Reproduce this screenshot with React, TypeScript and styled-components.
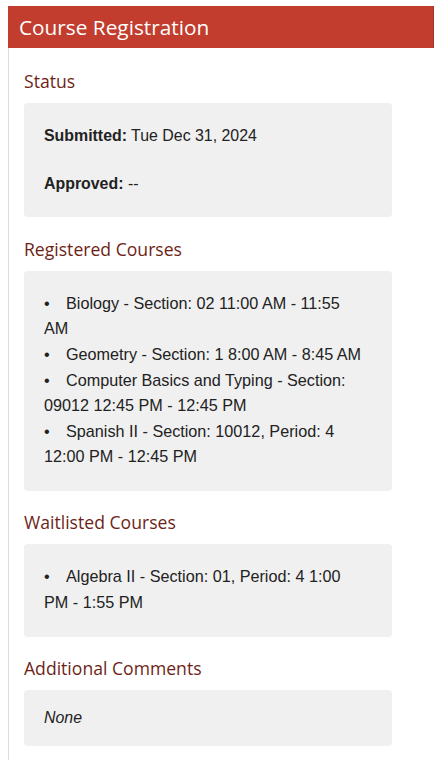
import React from "react";
import styled, { createGlobalStyle } from "styled-components";

const Global = createGlobalStyle`
  html, body { margin: 0; padding: 0; background: #fff; }
  body { font-family: "Liberation Sans", Arial, sans-serif; }
`;

const Page = styled.div`
  padding: 6px 0 0 8px;
`;

const Panel = styled.div`
  display: flex;
  flex-direction: column;
  min-height: calc(100vh - 6px);
`;

const Header = styled.div`
  background: #c23d2d;
  color: #fff;
  height: 42px;
  flex: none;
  display: flex;
  align-items: center;
  padding-left: 11px;
  font-family: "Open Sans", "Noto Sans", sans-serif;
  font-size: 20.8px;
  border-right: 1px solid #a9352a;
`;

const Body = styled.div`
  flex: 1;
  border-left: 1px solid #dcdcdc;
  padding: 1.5px 42px 20px 15px;
  display: flex;
  flex-direction: column;
`;

const Heading = styled.h3`
  margin: 20.5px 0 11px;
  font-family: "Open Sans", "Noto Sans", sans-serif;
  font-weight: 400;
  font-size: 17.6px;
  line-height: 22px;
  color: #6e1f17;
`;

const Box = styled.div<{ $compact?: boolean }>`
  background: #f0f0f0;
  border-radius: 4px;
  padding: ${(p) => (p.$compact ? "15px 20px 16px" : "20px 20px 21px")};
  color: #222;
  font-size: 15.9px;
  line-height: 25.3px;
  display: flex;
  flex-direction: column;
  gap: ${(p) => (p.$compact ? "0" : "22.7px")};
`;

const Row = styled.div``;

const Label = styled.b`
  font-weight: 700;
`;

const List = styled.ul`
  list-style: none;
  margin: 0;
  padding: 0 6px 0 0;
  font-size: 16.2px;
  line-height: 25.6px;
`;

const Item = styled.li`
  &::before {
    content: "•";
    display: inline-block;
    width: 22px;
  }
`;

const Note = styled.em`
  font-style: italic;
  color: #222;
`;

const registered = [
  "Biology - Section: 02 11:00 AM - 11:55 AM",
  "Geometry - Section: 1 8:00 AM - 8:45 AM",
  "Computer Basics and Typing - Section: 09012 12:45 PM - 12:45 PM",
  "Spanish II - Section: 10012, Period: 4 12:00 PM - 12:45 PM",
];

const waitlisted = ["Algebra II - Section: 01, Period: 4 1:00 PM - 1:55 PM"];

export default function App() {
  return (
    <>
      <Global />
      <Page>
        <Panel>
          <Header>Course Registration</Header>
          <Body>
            <Heading>Status</Heading>
            <Box>
              <Row>
                <Label>Submitted:</Label> Tue Dec 31, 2024
              </Row>
              <Row>
                <Label>Approved:</Label> --
              </Row>
            </Box>

            <Heading>Registered Courses</Heading>
            <Box>
              <List>
                {registered.map((c) => (
                  <Item key={c}>{c}</Item>
                ))}
              </List>
            </Box>

            <Heading>Waitlisted Courses</Heading>
            <Box>
              <List>
                {waitlisted.map((c) => (
                  <Item key={c}>{c}</Item>
                ))}
              </List>
            </Box>

            <Heading>Additional Comments</Heading>
            <Box $compact>
              <Note>None</Note>
            </Box>
          </Body>
        </Panel>
      </Page>
    </>
  );
}
